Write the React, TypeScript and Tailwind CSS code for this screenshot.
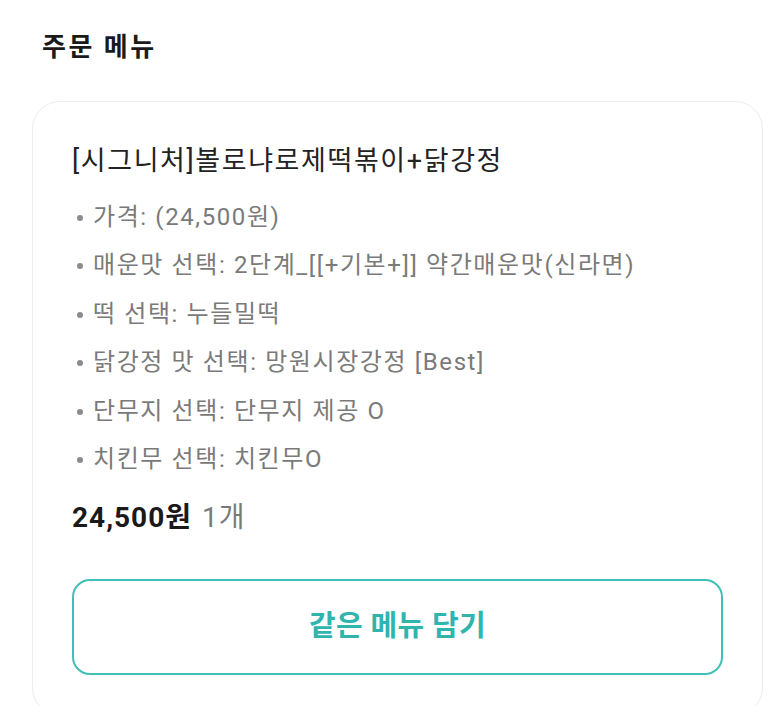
import React from "react";

const OPTIONS = [
  "가격: (24,500원)",
  "매운맛 선택: 2단계_[[+기본+]] 약간매운맛(신라면)",
  "떡 선택: 누들밀떡",
  "닭강정 맛 선택: 망원시장강정 [Best]",
  "단무지 선택: 단무지 제공 O",
  "치킨무 선택: 치킨무O",
];

export default function App() {
  return (
    <div
      className="w-[773px] h-[706px] overflow-hidden bg-white pl-[32px] pr-[10px]"
      style={{ fontFamily: 'Roboto, "Noto Sans CJK KR", sans-serif' }}
    >
      {/* Section title */}
      <h2 className="pl-[10px] pt-[29px] h-[101px] text-[26px] leading-[36px] tracking-[2.5px] font-bold text-[#1a1a1a]">
        주문 메뉴
      </h2>

      {/* Order card */}
      <div className="rounded-[28px] border border-[#ececec] px-[39px] pt-[42px] pb-[40px]">
        <p className="text-[27px] leading-[34px] tracking-[1.6px] text-[#222222]">
          [시그니처]볼로냐로제떡볶이+닭강정
        </p>

        <ul className="mt-[24px] flex flex-col gap-[18.4px]">
          {OPTIONS.map((o) => (
            <li
              key={o}
              className="flex items-center text-[24px] leading-[30px] tracking-[1.6px] text-[#7a7a7a]"
            >
              <span className="ml-[5px] mr-[10px] mt-[2px] h-[6px] w-[6px] shrink-0 rounded-full bg-[#8c8c8c]" />
              <span>{o}</span>
            </li>
          ))}
        </ul>

        <div className="mt-[27px] flex items-baseline gap-[10px] text-[28px] leading-[34px] tracking-[1px]">
          <span className="font-bold text-[#1a1a1a]">24,500원</span>
          <span className="text-[#7a7a7a]">1개</span>
        </div>

        <button className="mt-[44px] h-[96px] w-full rounded-[18px] border-2 border-[#40bfb8] text-[29px] tracking-[0.3px] font-bold text-[#2fb5ad]">
          같은 메뉴 담기
        </button>
      </div>
    </div>
  );
}
